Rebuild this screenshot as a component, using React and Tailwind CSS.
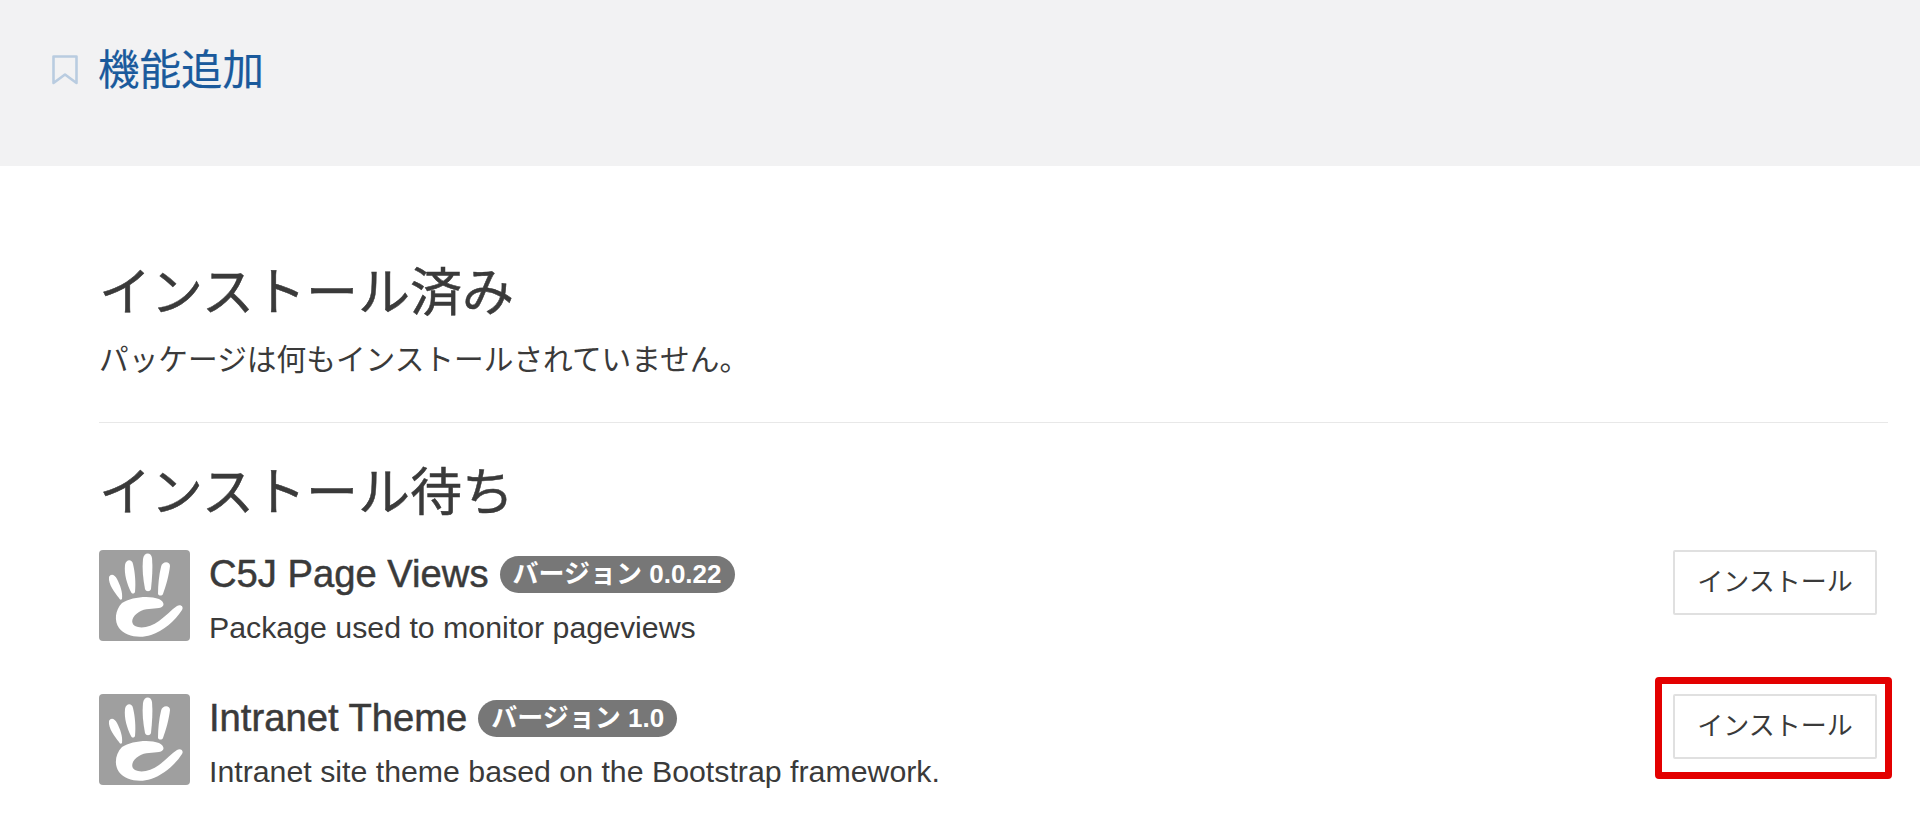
const jp = "font-['Liberation_Sans','Noto_Sans_CJK_JP',sans-serif]";

function Hand() {
  return (
    <svg viewBox="0 0 91 91" className="w-[91px] h-[91px] shrink-0 block">
      <rect x="0" y="0" width="91" height="91" rx="4" fill="#9f9f9f" />
      <g fill="#fff">
        <path d="M10 27 C12 23 16 25 18 29 C21 35 24 42 23 49 C22 50 21 50 20 48 C16 43 9 34 10 27 Z" />
        <path d="M26 15 C27 9 33 9 34 14 C36 22 37 33 36 42 C35 44 33 44 32 42 C28 34 25 24 26 15 Z" />
        <path d="M44 9 C45 2 52 2 53 8 C54 18 53 29 52 39 C51 42 47 42 46 39 C44 29 43 18 44 9 Z" />
        <path d="M62 17 C63 11 71 11 71 16 C70 25 67 36 64 44 C63 46 60 46 59 44 C59 35 60 25 62 17 Z" />
        <path d="M23 53 C32 47 50 45 60 49 C66 52 66 57 60 58 C54 59 46 58 40 62 C33 66 31 73 36 76 C42 79 52 77 60 71 C67 66 72 60 78 56 C82 54 85 57 83 60 C76 71 64 81 52 85 C40 89 26 86 20 78 C15 71 16 60 23 53 Z" />
      </g>
    </svg>
  );
}

function Row({ name, version, desc, highlight }) {
  return (
    <div className="flex items-start h-[144px]">
      <Hand />
      <div className="ml-[19px] flex-1 min-w-0">
        <div className="flex items-center h-[50px] mt-[-1px]">
          <span className="text-[38.2px] text-[#3a3a3a] [-webkit-text-stroke:0.5px_#3a3a3a]">{name}</span>
          <span className="ml-[11px] h-[37px] px-[13px] flex items-center rounded-full bg-[#777] text-white font-bold text-[26px]">バージョン {version}</span>
        </div>
        <p className="text-[30.3px] leading-[40px] mt-[9px] text-[#3a3a3a]">{desc}</p>
      </div>
      <div className="relative mr-[11px]">
        <button className="w-[204px] h-[65px] border-2 border-[#e0e0e0] rounded-[2px] bg-white text-[26px] text-[#3a3a3a]">インストール</button>
        {highlight && (
          <div className="absolute left-[-18px] top-[-17px] w-[237px] h-[102px] border-[7px] border-[#e30000] rounded-[4px]" />
        )}
      </div>
    </div>
  );
}

export default function App() {
  return (
    <div className={`${jp} bg-white h-[822px] overflow-hidden`}>
      <header className="h-[166px] bg-[#f2f2f3] flex items-start pl-[52px] pt-[49px]">
        <svg viewBox="0 0 26 30" className="w-[26px] h-[30px] mt-[6px]" fill="none" stroke="#b9cce0" strokeWidth="2.6" strokeLinejoin="round">
          <path d="M1.5 1.5 H24.5 V28 L13 19.5 L1.5 28 Z" />
        </svg>
        <h1 className="ml-[20px] text-[41.5px] leading-[44px] text-[#1a5a9c] [-webkit-text-stroke:0.2px_#1a5a9c]">機能追加</h1>
      </header>
      <main className="px-[99px] pr-[32px]">
        <h2 className="mt-[97px] text-[52px] leading-[60px] text-[#3a3a3a] [-webkit-text-stroke:0.5px_#3a3a3a]">インストール済み</h2>
        <p className="mt-[17px] text-[29.7px] leading-[40px] text-[#3a3a3a]">パッケージは何もインストールされていません。</p>
        <hr className="mt-[42px] border-[#e8e8e8]" />
        <h2 className="mt-[40px] text-[52px] leading-[60px] text-[#3a3a3a] [-webkit-text-stroke:0.5px_#3a3a3a]">インストール待ち</h2>
        <div className="mt-[27px]">
          <Row name="C5J Page Views" version="0.0.22" desc="Package used to monitor pageviews" />
          <Row name="Intranet Theme" version="1.0" desc="Intranet site theme based on the Bootstrap framework." highlight />
        </div>
      </main>
    </div>
  );
}
